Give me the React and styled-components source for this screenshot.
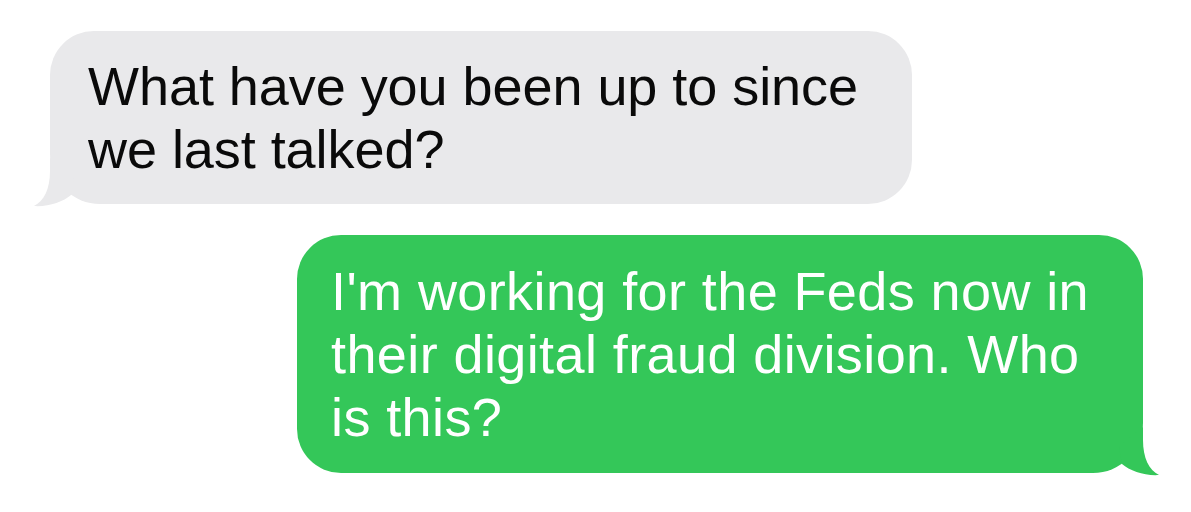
import React from 'react'
import styled, { createGlobalStyle, css } from 'styled-components'

const GlobalStyle = createGlobalStyle`
    html, body {
        margin: 0;
        padding: 0;
        background: #ffffff;
    }
    body {
        font-family: "Liberation Sans", Arial, Helvetica, sans-serif;
        -webkit-font-smoothing: antialiased;
    }
`

const Thread = styled.div`
    width: 1191px;
    height: 512px;
    box-sizing: border-box;
    padding-top: 31px;
    display: flex;
    flex-direction: column;
    gap: 31px;
    overflow: hidden;
`

const Bubble = styled.div`
    position: relative;
    box-sizing: border-box;
    border-radius: 44px;
    font-size: 54px;
    line-height: 63px;

    ${props => props.$sent ? css`
        align-self: flex-end;
        margin-right: 48px;
        width: 846px;
        padding: 25px 38px 24px 34px;
        border-bottom-right-radius: 50px;
        letter-spacing: 0.4px;
        background: #34c759;
        color: #ffffff;
    ` : css`
        align-self: flex-start;
        margin-left: 50px;
        width: 862px;
        padding: 24px 40px 23px 38px;
        border-bottom-left-radius: 50px;
        letter-spacing: -0.05px;
        background: #e9e9eb;
        color: #0a0a0a;
    `}
`

const TailSvg = styled.svg`
    position: absolute;
    bottom: -4px;
    width: 44px;
    height: 50px;
    ${props => props.$sent ? css`
        right: -20px;
    ` : css`
        left: -20px;
        transform: scaleX(-1);
    `}
`

function Tail({ sent, color }) {
  return (
    <TailSvg $sent={sent} viewBox="0 0 44 50">
      <path
        d="M3 37 C11 44 26 49 40 48 C30 43 24 31 24 13 L24 0 L0 20 Z"
        fill={color}
      />
    </TailSvg>
  )
}

const messages = [
  { id: 1, sent: false, text: 'What have you been up to since we last talked?' },
  { id: 2, sent: true, text: "I'm working for the Feds now in their digital fraud division. Who is this?" },
]

export default function App() {
  return (
    <>
      <GlobalStyle />
      <Thread>
        {messages.map(m => (
          <Bubble key={m.id} $sent={m.sent}>
            {m.text}
            <Tail sent={m.sent} color={m.sent ? '#34c759' : '#e9e9eb'} />
          </Bubble>
        ))}
      </Thread>
    </>
  )
}
